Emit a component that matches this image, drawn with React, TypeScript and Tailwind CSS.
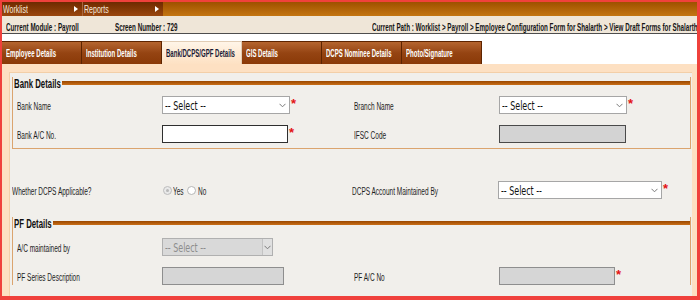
import React from "react";

const lbl =
  "inline-block whitespace-nowrap origin-left scale-x-[0.65] text-[10px] leading-[12px] text-[#1e1e1e]";
const infoTxt =
  "inline-block whitespace-nowrap origin-left scale-x-[0.57] text-[11px] leading-[13px] font-bold text-[#151515]";
const menuTxt =
  "inline-block whitespace-nowrap origin-left scale-x-[0.64] text-[11px] leading-[12px] text-[#f6e9dc]";
const legendTxt =
  "inline-block whitespace-nowrap origin-left scale-x-[0.65] text-[12px] leading-[12px] font-bold text-[#111]";

function Label({ children, className }: { children: React.ReactNode; className: string }) {
  return (
    <div className={`shrink-0 ${className}`}>
      <span className={lbl}>{children}</span>
    </div>
  );
}

function Star() {
  return (
    <span className="ml-[1px] mt-[1px] self-start font-bold text-[13px] leading-[14px] text-[#e31212]">*</span>
  );
}

function Chevron() {
  return (
    <svg width="7" height="5" viewBox="0 0 7 5" className="shrink-0">
      <polyline points="0.5,0.8 3.5,3.8 6.5,0.8" fill="none" stroke="#7a7a7a" strokeWidth="1" />
    </svg>
  );
}

function Select({ className, disabled }: { className: string; disabled?: boolean }) {
  return (
    <div
      className={`flex h-[18px] shrink-0 items-center border ${
        disabled ? "border-[#b0b0b0] bg-[#d9d9d9] text-[#8d8d8d]" : "border-[#a6a6a6] bg-white text-[#111]"
      } ${className}`}
    >
      <div className="pl-[2px]">
        <span className="inline-block whitespace-nowrap origin-left scale-x-[0.66] font-['DejaVu_Sans',sans-serif] text-[12px] leading-[14px]">
          -- Select --
        </span>
      </div>
      {disabled ? (
        <div className="ml-auto flex h-full w-[10px] items-center justify-center border-l border-[#c3c3c3] bg-[#e0e0e0]">
          <Chevron />
        </div>
      ) : (
        <div className="ml-auto mr-[3px] flex items-center">
          <Chevron />
        </div>
      )}
    </div>
  );
}

function Radio({ checked }: { checked?: boolean }) {
  return (
    <span
      className={`flex h-[9px] w-[9px] shrink-0 items-center justify-center rounded-full border ${
        checked ? "border-[#bdbdbd] bg-[#e9e9e9]" : "border-[#b5b5b5] bg-white"
      }`}
    >
      {checked ? <span className="h-[3px] w-[3px] rounded-full bg-[#b8b8b8]" /> : null}
    </span>
  );
}

function Tab({ label, active }: { label: string; active?: boolean }) {
  return (
    <div
      className={`flex w-[80px] shrink-0 items-center border-r border-t pl-[4px] ${
        active
          ? "border-[#e2cdb5] bg-linear-to-b from-[#fff5e8] to-[#fde1c3] text-[#1a1a35]"
          : "border-[#5e2400] bg-linear-to-b from-[#b5652f] via-[#954412] to-[#8a3907] text-white"
      }`}
    >
      <span className="inline-block whitespace-nowrap origin-left scale-x-[0.55] text-[11px] font-bold leading-[13px]">
        {label}
      </span>
    </div>
  );
}

function Legend({ text, w }: { text: string; w: string }) {
  return (
    <div className="flex h-[12px] items-center">
      <div className={`ml-[1px] shrink-0 ${w}`}>
        <span className={legendTxt}>{text}</span>
      </div>
      <div className="h-[4px] flex-1 bg-linear-to-b from-[#9a4700] to-[#c96f18]" />
    </div>
  );
}

export default function App() {
  return (
    <div className="flex h-[300px] w-[700px] flex-col overflow-hidden border-t-2 border-l-2 border-r-[3px] border-b-[4px] border-[#f0413c] bg-white font-['Liberation_Sans',Arial,sans-serif]">
      {/* menu bar */}
      <div className="flex h-[14px] shrink-0">
        <div className="flex w-[80px] shrink-0 items-center justify-between bg-linear-to-b from-[#6f2a00] to-[#9a470f] pl-[1px] pr-[4px]">
          <span className={menuTxt}>Worklist</span>
          <span className="h-0 w-0 border-y-[3px] border-l-[4px] border-y-transparent border-l-white" />
        </div>
        <div className="flex w-[81px] shrink-0 items-center justify-between border-l border-[#a9663a] bg-linear-to-b from-[#6f2a00] to-[#9a470f] pl-[1px] pr-[4px]">
          <span className={menuTxt}>Reports</span>
          <span className="h-0 w-0 border-y-[3px] border-l-[4px] border-y-transparent border-l-white" />
        </div>
        <div className="flex-1 bg-linear-to-b from-[#9e5000] to-[#c47612]" />
      </div>

      {/* info bar */}
      <div className="flex h-[18px] shrink-0 items-center overflow-hidden border-b border-[#4d4d4d] bg-[#efe6d8] pl-[4px] pt-[2px]">
        <div className="w-[109px] shrink-0">
          <span className={infoTxt}>Current Module : Payroll</span>
        </div>
        <div className="w-[257px] shrink-0">
          <span className={infoTxt}>Screen Number : 729</span>
        </div>
        <div className="shrink-0">
          <span className={infoTxt}>
            Current Path : Worklist &gt; Payroll &gt; Employee Configuration Form for Shalarth &gt; View Draft Forms for Shalarth
          </span>
        </div>
      </div>

      {/* tabs */}
      <div className="mt-[7px] flex h-[23px] shrink-0">
        <Tab label="Employee Details" />
        <Tab label="Institution Details" />
        <Tab label="Bank/DCPS/GPF Details" active />
        <Tab label="GIS Details" />
        <Tab label="DCPS Nominee Details" />
        <Tab label="Photo/Signature" />
      </div>

      {/* content */}
      <div className="flex min-h-0 flex-1 flex-col bg-[#fde0c2] pl-[7px] pr-[5px] pt-[8px]">
        <div className="flex-1 border-l border-t border-[#f3cfa8] bg-[#f1efeb] pt-[4px]">
          {/* Bank Details */}
          <div className="ml-[2px] w-[679px] border-x border-b border-[#dba46e]">
            <Legend text="Bank Details" w="w-[48px]" />
            <div className="pl-[4px] pt-[7px] pb-[5px]">
              <div className="flex h-[18px] items-center">
                <Label className="w-[145px]">Bank Name</Label>
                <div className="flex w-[192px] shrink-0">
                  <Select className="w-[128px]" />
                  <Star />
                </div>
                <Label className="w-[145px]">Branch Name</Label>
                <div className="flex shrink-0">
                  <Select className="w-[128px]" />
                  <Star />
                </div>
              </div>
              <div className="mt-[11px] flex h-[18px] items-center">
                <Label className="w-[145px]">Bank A/C No.</Label>
                <div className="flex w-[192px] shrink-0">
                  <div className="h-[18px] w-[126px] border border-[#2f2f2f] bg-white" />
                  <Star />
                </div>
                <Label className="w-[145px]">IFSC Code</Label>
                <div className="h-[18px] w-[127px] shrink-0 border border-[#4a4a4a] bg-[#d3d3d3]" />
              </div>
            </div>
          </div>

          {/* DCPS row */}
          <div className="ml-[2px] mt-[32px] flex h-[18px] items-center">
            <Label className="w-[150px]">Whether DCPS Applicable?</Label>
            <div className="flex w-[190px] shrink-0 items-center pl-[1px]">
              <Radio checked />
              <div className="ml-[1px] w-[14px] shrink-0">
                <span className={lbl}>Yes</span>
              </div>
              <Radio />
              <div className="ml-[2px] shrink-0">
                <span className={lbl}>No</span>
              </div>
            </div>
            <Label className="w-[146px]">DCPS Account Maintained By</Label>
            <div className="flex shrink-0">
              <Select className="w-[164px]" />
              <Star />
            </div>
          </div>

          {/* PF Details */}
          <div className="ml-[2px] mt-[18px] w-[679px] border-x border-[#dba46e]">
            <Legend text="PF Details" w="w-[39px]" />
            <div className="pl-[4px] pt-[9px]">
              <div className="flex h-[18px] items-center">
                <Label className="w-[145px]">A/C maintained by</Label>
                <Select className="w-[111px]" disabled />
              </div>
              <div className="mt-[11px] flex h-[18px] items-center">
                <Label className="w-[145px]">PF Series Description</Label>
                <div className="w-[192px] shrink-0">
                  <div className="h-[18px] w-[122px] border border-[#8e8e8e] bg-[#d6d6d6]" />
                </div>
                <Label className="w-[145px]">PF A/C No</Label>
                <div className="flex shrink-0">
                  <div className="h-[18px] w-[116px] border border-[#8e8e8e] bg-[#d6d6d6]" />
                  <Star />
                </div>
              </div>
            </div>
          </div>
        </div>
      </div>
    </div>
  );
}
